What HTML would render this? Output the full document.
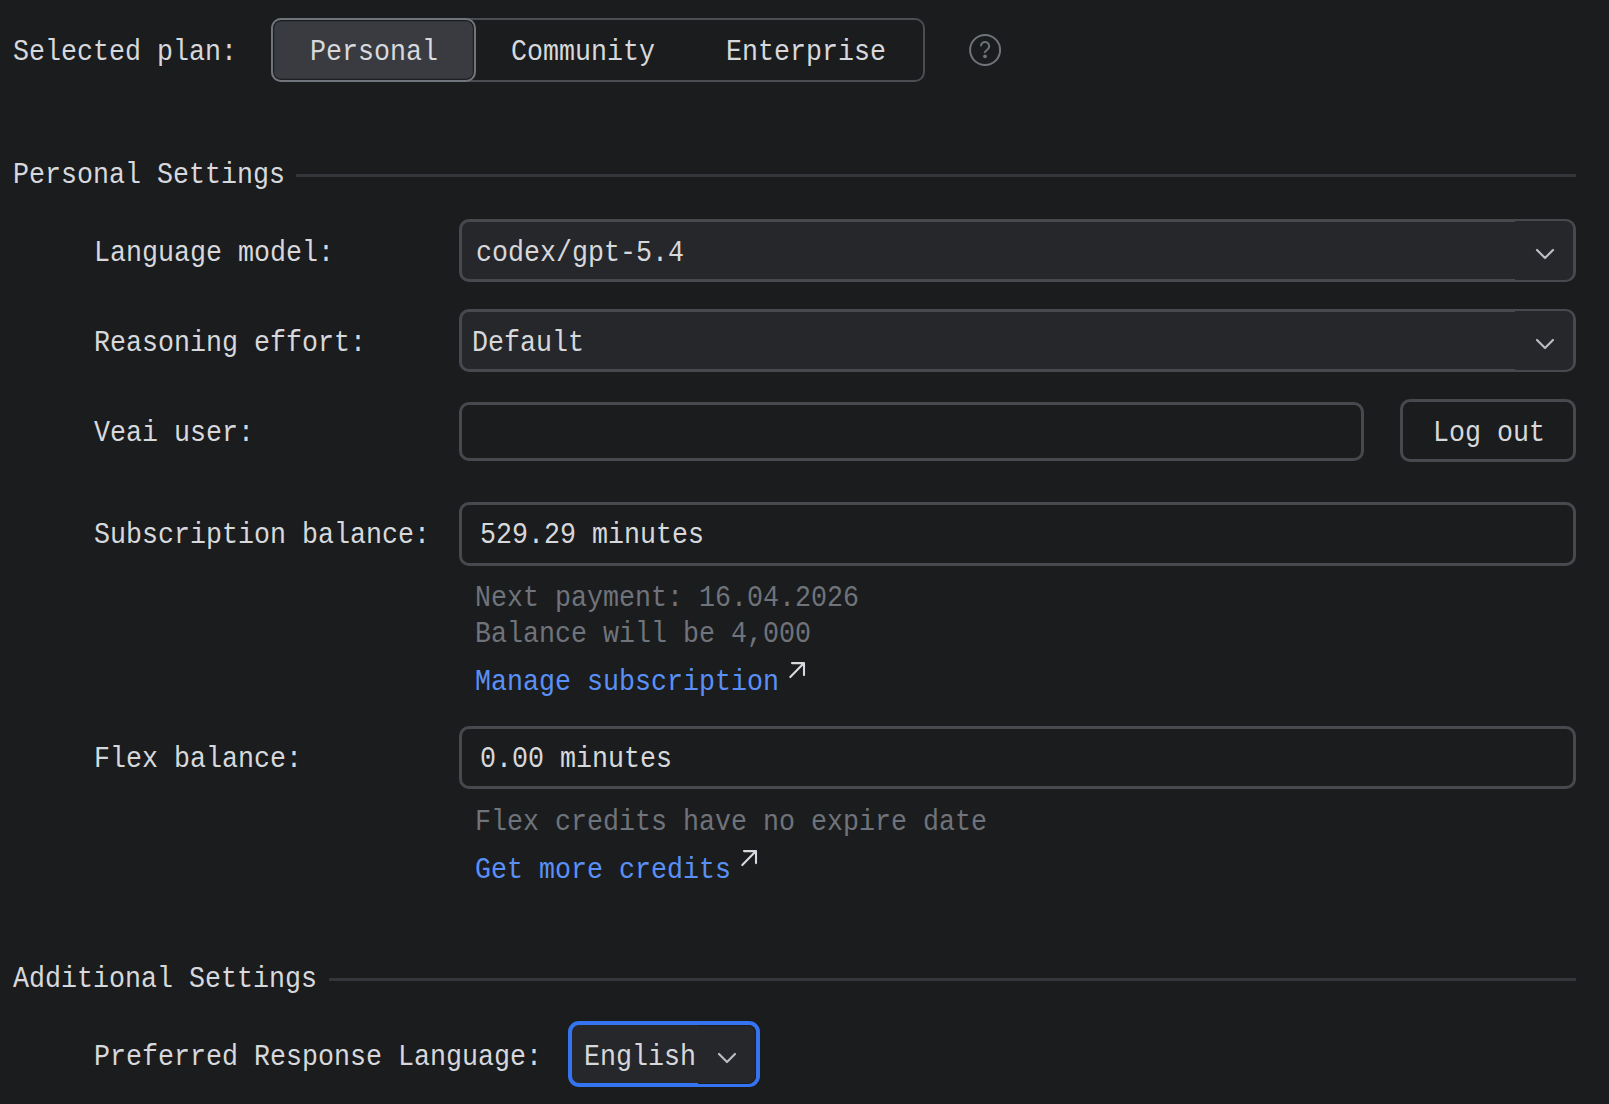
<!DOCTYPE html>
<html>
<head>
<meta charset="utf-8">
<style>
html,body{margin:0;padding:0;}
body{width:1609px;height:1104px;background:#1B1C1E;position:relative;overflow:hidden;font-family:"Liberation Mono",monospace;font-size:26.67px;color:#D6D8DC;}
.t{position:absolute;white-space:pre;line-height:30px;height:30px;transform-origin:0 22px;transform:scaleY(1.1);}
.b{position:absolute;box-sizing:border-box;}
.gray{color:#6F737A;}
.link{color:#5A90F6;}
</style>
</head>
<body>
<div class="t " style="left:13px;top:38px;">Selected plan:</div>
<div class="b" style="left:271px;top:18px;width:654px;height:64.4px;border:2.2px solid #4B4D52;border-radius:10px;"></div>
<div class="b" style="left:271px;top:18px;width:205px;height:64.4px;border:2.8px solid #70747B;border-radius:10px;background:#393B40;box-shadow:inset 0 0 0 1.2px #1E1F22;"></div>
<div class="t " style="left:310px;top:38px;">Personal</div>
<div class="t " style="left:511px;top:38px;">Community</div>
<div class="t " style="left:726px;top:38px;">Enterprise</div>
<svg class="b" style="left:968px;top:33px;" width="34" height="34" viewBox="0 0 34 34"><circle cx="17.1" cy="17" r="15" fill="none" stroke="#6F737A" stroke-width="2"/><path d="M13.0 12.4A4.1 4.1 0 1 1 20.0 15.9L16.8 19.1" fill="none" stroke="#6F737A" stroke-width="2" stroke-linecap="round" stroke-linejoin="round"/><circle cx="17" cy="23.3" r="1.9" fill="#6F737A"/></svg>
<div class="t " style="left:13px;top:161px;">Personal Settings</div>
<div class="b" style="left:296px;top:174px;width:1280px;height:2.6px;background:#35363B;"></div>
<div class="t " style="left:94px;top:239px;">Language model:</div>
<div class="b" style="left:458.5px;top:219px;width:1117.5px;height:63px;border:3px solid #48494E;border-radius:10px;background:#26272B;"></div>
<div class="b" style="left:1515px;top:221px;width:58px;height:59px;background:#26272B;border-radius:0 8px 8px 0;"></div>
<div class="t " style="left:476px;top:239px;">codex/gpt-5.4</div>
<svg class="b" style="left:1530.05px;top:237.89999999999998px;" width="30" height="30" viewBox="0 0 30 30"><path d="M7 12L15 20L23 12" fill="none" stroke="#B9BCC3" stroke-width="2.2" stroke-linecap="round" stroke-linejoin="round"/></svg>
<div class="t " style="left:94px;top:329px;">Reasoning effort:</div>
<div class="b" style="left:458.5px;top:309px;width:1117.5px;height:62.5px;border:3px solid #48494E;border-radius:10px;background:#26272B;"></div>
<div class="b" style="left:1515px;top:311px;width:58px;height:58.5px;background:#26272B;border-radius:0 8px 8px 0;"></div>
<div class="t " style="left:472px;top:329px;">Default</div>
<svg class="b" style="left:1530.05px;top:327.9px;" width="30" height="30" viewBox="0 0 30 30"><path d="M7 12L15 20L23 12" fill="none" stroke="#B9BCC3" stroke-width="2.2" stroke-linecap="round" stroke-linejoin="round"/></svg>
<div class="t " style="left:94px;top:419px;">Veai user:</div>
<div class="b" style="left:458.5px;top:402px;width:905.8px;height:58.5px;border:3px solid #48494E;border-radius:10px;"></div>
<div class="b" style="left:1400.3px;top:399px;width:175.7px;height:63px;border:3px solid #48494E;border-radius:10px;"></div>
<div class="t " style="left:1433px;top:419px;">Log out</div>
<div class="t " style="left:94px;top:521px;">Subscription balance:</div>
<div class="b" style="left:458.5px;top:502.3px;width:1117.5px;height:63.3px;border:3px solid #48494E;border-radius:10px;"></div>
<div class="t " style="left:480px;top:521px;">529.29 minutes</div>
<div class="t gray" style="left:475px;top:584px;">Next payment: 16.04.2026</div>
<div class="t gray" style="left:475px;top:620px;">Balance will be 4,000</div>
<div class="t link" style="left:475px;top:668px;">Manage subscription</div>
<svg class="b" style="left:783.7px;top:657.1px;" width="26" height="26" viewBox="0 0 26 26"><path d="M6.3 20.1L20 6.1M8 6.1H20V18.1" fill="none" stroke="#D7D9DE" stroke-width="2.1" stroke-linecap="round" stroke-linejoin="round"/></svg>
<div class="t " style="left:94px;top:745px;">Flex balance:</div>
<div class="b" style="left:458.5px;top:726.3px;width:1117.5px;height:62.5px;border:3px solid #48494E;border-radius:10px;"></div>
<div class="t " style="left:480px;top:745px;">0.00 minutes</div>
<div class="t gray" style="left:475px;top:808px;">Flex credits have no expire date</div>
<div class="t link" style="left:475px;top:856px;">Get more credits</div>
<svg class="b" style="left:735.5px;top:845.1px;" width="26" height="26" viewBox="0 0 26 26"><path d="M6.3 20.1L20 6.1M8 6.1H20V18.1" fill="none" stroke="#D7D9DE" stroke-width="2.1" stroke-linecap="round" stroke-linejoin="round"/></svg>
<div class="t " style="left:13px;top:965px;">Additional Settings</div>
<div class="b" style="left:329px;top:978px;width:1247px;height:2.6px;background:#35363B;"></div>
<div class="t " style="left:94px;top:1043px;">Preferred Response Language:</div>
<div class="b" style="left:568px;top:1021.3px;width:192px;height:66.2px;border:4.8px solid #3574F0;border-radius:11px;background:#26272B;"></div>
<div class="b" style="left:698px;top:1024.9px;width:58.4px;height:59px;background:#26272B;border:1.1px solid #1C1E24;border-left:none;border-radius:0 8px 8px 0;"></div>
<div class="t " style="left:584px;top:1043px;">English</div>
<svg class="b" style="left:712px;top:1042.1px;" width="30" height="30" viewBox="0 0 30 30"><path d="M7 12L15 20L23 12" fill="none" stroke="#B9BCC3" stroke-width="2.2" stroke-linecap="round" stroke-linejoin="round"/></svg>
</body>
</html>
